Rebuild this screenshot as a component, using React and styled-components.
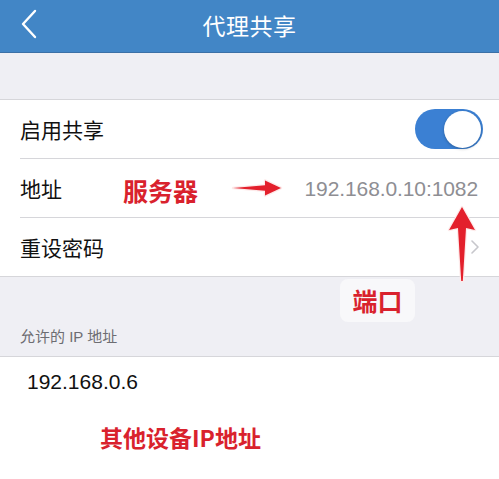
import React from 'react'
import styled, { createGlobalStyle } from 'styled-components'

const GlobalStyle = createGlobalStyle`
  html, body {
    margin: 0;
    padding: 0;
    background: #ffffff;
  }
  body {
    font-family: "Liberation Sans", "Noto Sans CJK SC", sans-serif;
  }
`

const App = () => {
  return (
    <Page>
      <GlobalStyle />
      <NavBar>
        <BackButton>
          <svg width="18" height="30" viewBox="0 0 18 30">
            <path d="M15 2 L3 15 L15 28" fill="none" stroke="#fff" strokeWidth="2.4" strokeLinecap="round" strokeLinejoin="round" />
          </svg>
        </BackButton>
        <Title>代理共享</Title>
      </NavBar>

      <Spacer />

      <Group>
        <Row>
          <Label>启用共享</Label>
          <Switch>
            <Knob />
          </Switch>
        </Row>
        <Row>
          <Label>地址</Label>
          <Value>192.168.0.10:1082</Value>
        </Row>
        <Row last>
          <Label>重设密码</Label>
          <Chevron>
            <svg width="8" height="14" viewBox="0 0 8 14">
              <path d="M1 1 L7 7 L1 13" fill="none" stroke="#c7c7cc" strokeWidth="1.6" strokeLinecap="round" strokeLinejoin="round" />
            </svg>
          </Chevron>
        </Row>
      </Group>

      <SectionHeader>允许的 IP 地址</SectionHeader>

      <List>
        <IpRow>192.168.0.6</IpRow>
      </List>

      <Note top={175} left={123} size={25}>服务器</Note>
      <Arrow style={{ left: 229, top: 177 }}>
        <svg width="56" height="22" viewBox="0 0 56 22">
          <path
            d="M4 11 L36 8.2 L36 3.5 L52 11 L36 18.5 L36 13.8 Z"
            fill="#e3202c"
            stroke="#fdeaea"
            strokeWidth="2.5"
            strokeLinejoin="round"
            paintOrder="stroke"
          />
        </svg>
      </Arrow>
      <Arrow style={{ left: 446, top: 204 }}>
        <svg width="32" height="80" viewBox="0 0 32 80">
          <path
            d="M16 3 L29 26 L20 24 L16.8 77 L15.2 77 L12 24 L3 26 Z"
            fill="#e3202c"
            stroke="#fdeaea"
            strokeWidth="2.5"
            strokeLinejoin="round"
            paintOrder="stroke"
          />
        </svg>
      </Arrow>
      <PortTag>端口</PortTag>
      <Note top={424} left={100} size={23}>其他设备IP地址</Note>
    </Page>
  )
}

export default App

const Page = styled.div`
  position: relative;
  width: 499px;
  height: 479px;
  overflow: hidden;
  background: #efeff4;
  display: flex;
  flex-direction: column;
`
const NavBar = styled.div`
  height: 52px;
  flex-shrink: 0;
  background: #4286c6;
  border-bottom: 1px solid #3b70a6;
  display: flex;
  align-items: center;
  justify-content: center;
  position: relative;
`
const BackButton = styled.div`
  position: absolute;
  left: 20px;
  top: 9px;
  display: flex;
`
const Title = styled.div`
  color: #ffffff;
  font-size: 23px;
  letter-spacing: 0.5px;
  margin-top: -2px;
`
const Spacer = styled.div`
  height: 46px;
  flex-shrink: 0;
`
const Group = styled.div`
  background: #ffffff;
  border-top: 1px solid #d6d6da;
  border-bottom: 1px solid #d6d6da;
  padding-left: 20px;
`
const Row = styled.div`
  height: 58px;
  display: flex;
  align-items: center;
  justify-content: space-between;
  padding-right: 16px;
  border-bottom: ${p => (p.last ? 'none' : '1px solid #d6d6da')};
`
const Label = styled.div`
  font-size: 21px;
  color: #111111;
`
const Value = styled.div`
  font-size: 21px;
  color: #8e8e93;
  margin-top: 2px;
  margin-right: 5px;
  letter-spacing: -0.1px;
`
const Switch = styled.div`
  width: 68px;
  height: 40px;
  border-radius: 20px;
  background: #3b80d3;
  display: flex;
  align-items: center;
  justify-content: flex-end;
  padding: 0 2px;
  box-sizing: border-box;
`
const Knob = styled.div`
  width: 37px;
  height: 37px;
  border-radius: 50%;
  background: #ffffff;
  box-shadow: 0 1px 3px rgba(0, 0, 0, 0.25);
`
const Chevron = styled.div`
  display: flex;
  margin-right: 4px;
`
const SectionHeader = styled.div`
  height: 79px;
  display: flex;
  align-items: flex-end;
  padding: 0 0 10px 20px;
  box-sizing: border-box;
  font-size: 15px;
  color: #6d6d72;
`
const List = styled.div`
  flex: 1;
  background: #ffffff;
  border-top: 1px solid #d6d6da;
`
const IpRow = styled.div`
  height: 50px;
  display: flex;
  align-items: center;
  padding-left: 27px;
  font-size: 21px;
  color: #111111;
`
const Note = styled.div`
  position: absolute;
  top: ${p => p.top}px;
  left: ${p => p.left}px;
  font-size: ${p => p.size}px;
  font-weight: 700;
  color: #d9222d;
  font-family: "Noto Sans CJK SC", sans-serif;
  line-height: 1.2;
`
const Arrow = styled.div`
  position: absolute;
  display: flex;
`
const PortTag = styled.div`
  position: absolute;
  left: 340px;
  top: 279px;
  width: 75px;
  height: 43px;
  border-radius: 8px;
  background: #f8f8fa;
  display: flex;
  align-items: center;
  justify-content: center;
  font-size: 25px;
  font-weight: 700;
  color: #d9222d;
  font-family: "Noto Sans CJK SC", sans-serif;
  line-height: 1;
`
